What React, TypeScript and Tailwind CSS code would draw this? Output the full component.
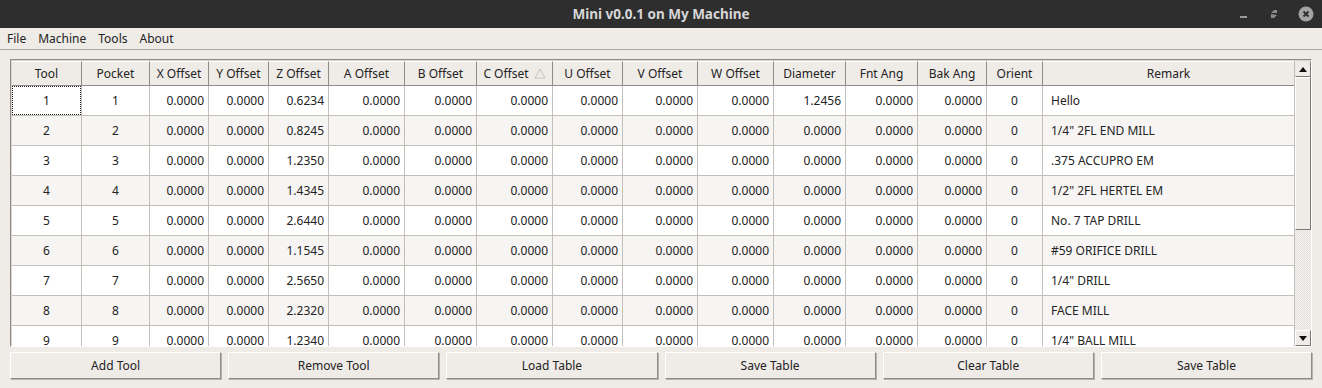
import React from "react";

// Tool table window — Qt-style offsets editor.

const COLS = [
  { label: "Tool", align: "center" },
  { label: "Pocket", align: "center" },
  { label: "X Offset", align: "right" },
  { label: "Y Offset", align: "right" },
  { label: "Z Offset", align: "right" },
  { label: "A Offset", align: "right" },
  { label: "B Offset", align: "right" },
  { label: "C Offset", align: "right" },
  { label: "U Offset", align: "right" },
  { label: "V Offset", align: "right" },
  { label: "W Offset", align: "right" },
  { label: "Diameter", align: "right" },
  { label: "Fnt Ang", align: "right" },
  { label: "Bak Ang", align: "right" },
  { label: "Orient", align: "center" },
  { label: "Remark", align: "left" },
] as const;

const ROWS: { z: string; dia: string; remark: string }[] = [
  { z: "0.6234", dia: "1.2456", remark: "Hello" },
  { z: "0.8245", dia: "0.0000", remark: '1/4" 2FL END MILL' },
  { z: "1.2350", dia: "0.0000", remark: ".375 ACCUPRO EM" },
  { z: "1.4345", dia: "0.0000", remark: '1/2" 2FL HERTEL EM' },
  { z: "2.6440", dia: "0.0000", remark: "No. 7 TAP DRILL" },
  { z: "1.1545", dia: "0.0000", remark: "#59 ORIFICE DRILL" },
  { z: "2.5650", dia: "0.0000", remark: '1/4" DRILL' },
  { z: "2.2320", dia: "0.0000", remark: "FACE MILL" },
  { z: "1.2340", dia: "0.0000", remark: '1/4" BALL MILL' },
];

const Z = "0.0000";

function rowValues(i: number, r: (typeof ROWS)[number]): string[] {
  const n = String(i + 1);
  return [n, n, Z, Z, r.z, Z, Z, Z, Z, Z, Z, r.dia, Z, Z, "0", r.remark];
}

const GRID =
  "grid grid-cols-[70px_68px_59px_60px_60px_76px_72px_76px_70px_75px_76px_72px_72px_69px_56px_252px]";

function alignClass(a: string) {
  if (a === "center") return "justify-center";
  if (a === "right") return "justify-end pr-[4px]";
  return "justify-start pl-[8px]";
}

function TitleBar() {
  return (
    <div className="relative flex h-[28px] items-center justify-center bg-[#2e2e2e]">
      <span className="text-[13.5px] font-bold text-[#d6d6d6]">Mini v0.0.1 on My Machine</span>
      <div className="absolute right-[8px] top-0 flex h-[28px] items-center gap-[16px]">
        <svg width="14" height="14" viewBox="0 0 14 14">
          <rect x="3" y="9" width="7" height="2" fill="#9a9a9a" />
        </svg>
        <svg width="14" height="14" viewBox="0 0 14 14">
          <path d="M4 6 L7 3 L10 3 L10 6 Z M4 7 L4 11 L7 11 L10 8 Z" fill="#8a8a8a" />
        </svg>
        <svg width="16" height="16" viewBox="0 0 16 16" className="ml-[1px]">
          <circle cx="8" cy="8" r="7.5" fill="#a3a3a3" />
          <path d="M5.5 5.5 L10.5 10.5 M10.5 5.5 L5.5 10.5" stroke="#2e2e2e" strokeWidth="1.8" />
        </svg>
      </div>
    </div>
  );
}

function MenuBar() {
  return (
    <div className="flex h-[22px] items-center gap-[12px] border-b border-[#a9a6a2] pl-[7px]">
      {["File", "Machine", "Tools", "About"].map((m) => (
        <span key={m}>{m}</span>
      ))}
    </div>
  );
}

function Header() {
  return (
    <div className={GRID + " h-[25px] bg-[#efebe7]"}>
      {COLS.map((c) => (
        <div
          key={c.label}
          className="flex items-center justify-center gap-[5px] border-b border-r border-t border-b-[#8e8b88] border-r-[#8e8b88] border-t-white"
        >
          <span>{c.label}</span>
          {c.label === "C Offset" && (
            <svg width="12" height="11" viewBox="0 0 12 11">
              <path d="M6 1 L11 10 L1 10 Z" fill="none" stroke="#c4c1bd" strokeWidth="1" />
            </svg>
          )}
        </div>
      ))}
    </div>
  );
}

function Row({ i }: { i: number }) {
  const vals = rowValues(i, ROWS[i]);
  const bg = i % 2 === 0 ? "bg-white" : "bg-[#f7f5f3]";
  return (
    <div className={GRID + " h-[30px] " + bg}>
      {vals.map((v, j) => (
        <div
          key={j}
          className={
            "relative flex items-center whitespace-nowrap border-b border-r border-[#c3c0bc] " +
            alignClass(COLS[j].align)
          }
        >
          {i === 0 && j === 0 && (
            <span className="absolute inset-0 border border-dotted border-[#222]" />
          )}
          {v}
        </div>
      ))}
    </div>
  );
}

function ScrollBar() {
  return (
    <div className="flex w-[17px] flex-col border-l border-[#c3c0bc] bg-[repeating-conic-gradient(#f4f2f0_0_25%,#e4e1de_0_50%)] bg-[length:2px_2px]">
      <div className="flex h-[16px] items-center justify-center border border-[#e9e6e3] border-b-[#7c7a77] border-r-[#7c7a77] bg-[#efebe7]">
        <svg width="8" height="5" viewBox="0 0 8 5">
          <path d="M0 5 L4 0 L8 5 Z" fill="#111" />
        </svg>
      </div>
      <div className="h-[153px] border border-white border-b-[#7c7a77] border-r-[#7c7a77] bg-[#efebe7]" />
      <div className="flex-1" />
      <div className="flex h-[16px] items-center justify-center border border-white border-b-[#7c7a77] border-r-[#7c7a77] bg-[#efebe7]">
        <svg width="8" height="5" viewBox="0 0 8 5">
          <path d="M0 0 L8 0 L4 5 Z" fill="#111" />
        </svg>
      </div>
    </div>
  );
}

export default function App() {
  const buttons = ["Add Tool", "Remove Tool", "Load Table", "Save Table", "Clear Table", "Save Table"];
  return (
    <div
      className="flex h-[388px] w-[1322px] flex-col overflow-hidden bg-[#efebe7] text-[12px] text-[#232323]"
      style={{ fontFamily: '"Noto Sans", "DejaVu Sans", sans-serif' }}
    >
      <TitleBar />
      <MenuBar />
      <div className="flex flex-1 flex-col px-[10px] pt-[9px]">
        <div className="flex h-[288px] border border-[#8e8b88] border-b-white border-r-white">
          <div className="flex flex-1 overflow-hidden border-l border-t border-[#d8d5d1]">
            <div className="flex-1 overflow-hidden">
              <Header />
              {ROWS.map((_, i) => (
                <Row key={i} i={i} />
              ))}
            </div>
            <ScrollBar />
          </div>
        </div>
        <div className="mt-[5px] grid grid-cols-6 gap-[7px]">
          {buttons.map((b, i) => (
            <div
              key={i}
              className="flex h-[27px] items-center justify-center border border-white border-b-[#8e8b88] border-r-[#8e8b88] bg-[#efebe7] shadow-[1px_1px_0_#b7b4b0]"
            >
              {b}
            </div>
          ))}
        </div>
      </div>
    </div>
  );
}
